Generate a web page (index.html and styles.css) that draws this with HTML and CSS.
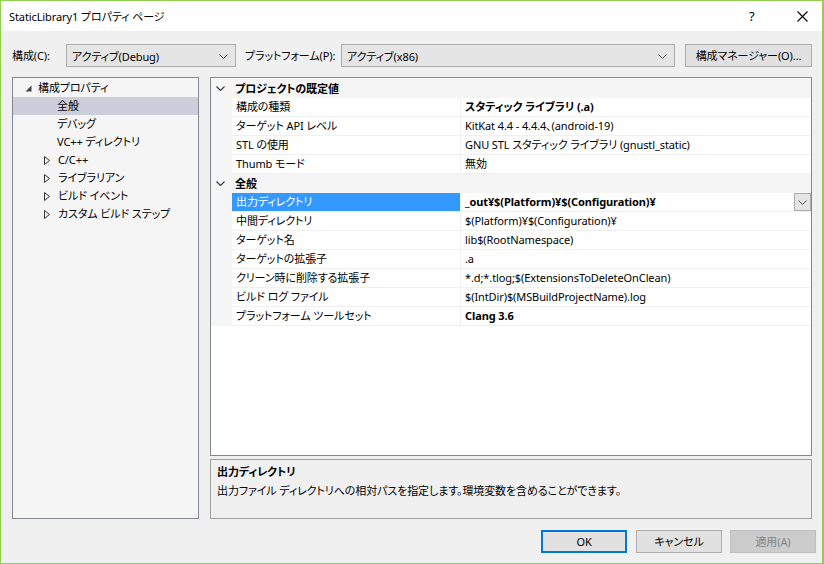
FILE: index.html
```html
<!DOCTYPE html>
<html lang="ja">
<head>
  <meta charset="UTF-8" />
  <title>StaticLibrary1 プロパティ ページ</title>
  <link rel="stylesheet" href="styles.css">
</head>
<body>
  <div class="window">
    <div class="titlebar">
      <span class="title">StaticLibrary1 プロパティ ページ</span>
      <span class="help">?</span>
      <span class="close">
        <svg width="11" height="11" viewBox="0 0 11 11"><path d="M0.5 0.5 L10.5 10.5 M10.5 0.5 L0.5 10.5" stroke="#000" stroke-width="1.1" fill="none"/></svg>
      </span>
    </div>

    <div class="content">
      <div class="toolbar">
        <span class="tb-label">構成(C):</span>
        <div class="combo combo-config">
          <span>アクティブ(Debug)</span>
          <svg class="chev" width="9" height="5" viewBox="0 0 9 5"><path d="M0.5 0.5 L4.5 4.5 L8.5 0.5" stroke="#555" fill="none"/></svg>
        </div>
        <span class="tb-label tb-platform">プラットフォーム(P):</span>
        <div class="combo combo-platform">
          <span>アクティブ(x86)</span>
          <svg class="chev" width="9" height="5" viewBox="0 0 9 5"><path d="M0.5 0.5 L4.5 4.5 L8.5 0.5" stroke="#555" fill="none"/></svg>
        </div>
        <button class="btn btn-manager">構成マネージャー(O)...</button>
      </div>

      <div class="main">
        <div class="tree">
          <div class="tree-row lvl0">
            <svg class="exp" width="7" height="7" viewBox="0 0 7 7"><path d="M6.5 0.5 L6.5 6.5 L0.5 6.5 Z" fill="#444"/></svg>
            <span>構成プロパティ</span>
          </div>
          <div class="tree-row lvl1 selected"><span>全般</span></div>
          <div class="tree-row lvl1"><span>デバッグ</span></div>
          <div class="tree-row lvl1"><span>VC++ ディレクトリ</span></div>
          <div class="tree-row lvl1 has-kids">
            <svg class="exp" width="6" height="9" viewBox="0 0 6 9"><path d="M0.5 0.5 L5.5 4.5 L0.5 8.5 Z" fill="none" stroke="#333"/></svg>
            <span>C/C++</span>
          </div>
          <div class="tree-row lvl1 has-kids">
            <svg class="exp" width="6" height="9" viewBox="0 0 6 9"><path d="M0.5 0.5 L5.5 4.5 L0.5 8.5 Z" fill="none" stroke="#333"/></svg>
            <span>ライブラリアン</span>
          </div>
          <div class="tree-row lvl1 has-kids">
            <svg class="exp" width="6" height="9" viewBox="0 0 6 9"><path d="M0.5 0.5 L5.5 4.5 L0.5 8.5 Z" fill="none" stroke="#333"/></svg>
            <span>ビルド イベント</span>
          </div>
          <div class="tree-row lvl1 has-kids">
            <svg class="exp" width="6" height="9" viewBox="0 0 6 9"><path d="M0.5 0.5 L5.5 4.5 L0.5 8.5 Z" fill="none" stroke="#333"/></svg>
            <span>カスタム ビルド ステップ</span>
          </div>
        </div>

        <div class="right">
          <div class="grid">
            <div class="cat-row">
              <svg class="cat-chev" width="9" height="5" viewBox="0 0 9 5"><path d="M0.5 0.5 L4.5 4.5 L8.5 0.5" stroke="#444" stroke-width="1.3" fill="none"/></svg>
              <span>プロジェクトの既定値</span>
            </div>
            <div class="prop-row"><div class="pname">構成の種類</div><div class="pval bold">スタティック ライブラリ (.a)</div></div>
            <div class="prop-row"><div class="pname">ターゲット API レベル</div><div class="pval">KitKat 4.4 - 4.4.4、(android-19)</div></div>
            <div class="prop-row"><div class="pname">STL の使用</div><div class="pval">GNU STL スタティック ライブラリ (gnustl_static)</div></div>
            <div class="prop-row"><div class="pname">Thumb モード</div><div class="pval">無効</div></div>
            <div class="cat-row">
              <svg class="cat-chev" width="9" height="5" viewBox="0 0 9 5"><path d="M0.5 0.5 L4.5 4.5 L8.5 0.5" stroke="#444" stroke-width="1.3" fill="none"/></svg>
              <span>全般</span>
            </div>
            <div class="prop-row active">
              <div class="pname">出力ディレクトリ</div>
              <div class="pval bold">
                <span>_out¥$(Platform)¥$(Configuration)¥</span>
                <span class="drop"><svg width="9" height="5" viewBox="0 0 9 5"><path d="M0.5 0.5 L4.5 4.5 L8.5 0.5" stroke="#555" fill="none"/></svg></span>
              </div>
            </div>
            <div class="prop-row"><div class="pname">中間ディレクトリ</div><div class="pval">$(Platform)¥$(Configuration)¥</div></div>
            <div class="prop-row"><div class="pname">ターゲット名</div><div class="pval">lib$(RootNamespace)</div></div>
            <div class="prop-row"><div class="pname">ターゲットの拡張子</div><div class="pval">.a</div></div>
            <div class="prop-row"><div class="pname">クリーン時に削除する拡張子</div><div class="pval">*.d;*.tlog;$(ExtensionsToDeleteOnClean)</div></div>
            <div class="prop-row"><div class="pname">ビルド ログ ファイル</div><div class="pval">$(IntDir)$(MSBuildProjectName).log</div></div>
            <div class="prop-row"><div class="pname">プラットフォーム ツールセット</div><div class="pval bold">Clang 3.6</div></div>
          </div>

          <div class="desc">
            <div class="desc-title">出力ディレクトリ</div>
            <div class="desc-text">出力ファイル ディレクトリへの相対パスを指定します。環境変数を含めることができます。</div>
          </div>
        </div>
      </div>

      <div class="footer">
        <button class="btn btn-ok">OK</button>
        <button class="btn">キャンセル</button>
        <button class="btn btn-disabled">適用(A)</button>
      </div>
    </div>
  </div>
</body>
</html>
```

FILE: styles.css
```css
* {
  box-sizing: border-box;
}

body {
  margin: 0;
  padding: 0;
  font-family: "Noto Sans", "Noto Sans CJK JP", sans-serif;
  font-feature-settings: "palt";
  font-size: 11px;
  letter-spacing: -0.1px;
  color: #000;
  background: #f0f0f0;
}

.window {
  width: 824px;
  height: 564px;
  border: 1px solid #8fd14f;
  border-right-width: 2px;
  display: flex;
  flex-direction: column;
  background: #f0f0f0;
}

.titlebar {
  height: 30px;
  background: #fff;
  display: flex;
  align-items: center;
  padding-left: 8px;
}

.title {
  flex: 1;
  line-height: 16px;
  margin-top: 1px;
}

.help {
  width: 14px;
  font-size: 13px;
  margin-right: 34px;
}

.close {
  display: flex;
  margin-right: 14px;
}

.content {
  flex: 1;
  display: flex;
  flex-direction: column;
  padding: 13px 10px 0 11px;
}

.toolbar {
  display: flex;
  align-items: center;
  height: 23px;
}

.tb-label {
  flex: none;
  white-space: nowrap;
  line-height: 16px;
  width: 54px;
}

.tb-platform {
  width: 96px;
  margin-left: 9px;
}

.combo {
  flex: none;
  height: 23px;
  background: #e5e5e5;
  border: 1px solid #acacac;
  display: flex;
  align-items: center;
  justify-content: space-between;
  padding: 0 7px 0 5px;
  white-space: nowrap;
}

.combo-config {
  width: 170px;
}

.combo-platform {
  width: 334px;
}

.chev {
  margin-top: 1px;
}

.btn {
  font-family: inherit;
  font-size: 11px;
  font-feature-settings: "palt";
  letter-spacing: -0.1px;
  height: 23px;
  width: 86px;
  background: #e1e1e1;
  border: 1px solid #adadad;
  color: #000;
  padding: 0;
  line-height: 16px;
  white-space: nowrap;
}

.btn-manager {
  flex: none;
  width: 127px;
  margin-left: 10px;
}

.main {
  display: flex;
  gap: 11px;
  margin-top: 10px;
  height: 442px;
}

.tree {
  width: 187px;
  background: #f5f5f5;
  border: 1px solid #828790;
  padding-top: 1px;
}

.tree-row {
  height: 18px;
  display: flex;
  align-items: center;
  line-height: 16px;
  white-space: nowrap;
}

.tree-row.lvl0 {
  padding-left: 12px;
}

.tree-row.lvl0 .exp {
  margin-right: 6px;
}

.tree-row.lvl1 {
  padding-left: 44px;
}

.tree-row.has-kids {
  padding-left: 31px;
}

.tree-row.has-kids .exp {
  margin-right: 8px;
}

.tree-row.selected {
  background: #cccedb;
}

.right {
  flex: 1;
  display: flex;
  flex-direction: column;
  gap: 3px;
}

.grid {
  height: 379px;
  background: #fff;
  border: 1px solid #828790;
  padding-top: 1px;
}

.cat-row {
  height: 19px;
  display: flex;
  align-items: center;
  background: #f5f5f5;
  font-weight: bold;
  line-height: 16px;
}

.cat-chev {
  margin: 0 10px 0 5px;
}

.prop-row {
  height: 19px;
  display: flex;
  padding-left: 21px;
  background: #f5f5f5;
}

.pname, .pval {
  height: 19px;
  display: flex;
  align-items: center;
  background: #fff;
  border-bottom: 1px solid #f0f0f0;
  line-height: 16px;
  padding-left: 4px;
  white-space: nowrap;
}

.pname {
  width: 229px;
  border-right: 1px solid #f0f0f0;
}

.pval {
  flex: 1;
  justify-content: space-between;
}

.bold {
  font-weight: bold;
}

.prop-row.active .pname {
  background: #3399ff;
  color: #fff;
}

.drop {
  width: 17px;
  height: 18px;
  background: #e5e5e5;
  border: 1px solid #acacac;
  display: flex;
  align-items: center;
  justify-content: center;
}

.desc {
  height: 60px;
  border: 1px solid #a0a0a0;
  background: #f0f0f0;
  padding: 3px 6px;
}

.desc-title {
  font-weight: bold;
  line-height: 18px;
}

.desc-text {
  line-height: 20px;
}

.footer {
  display: flex;
  justify-content: flex-end;
  gap: 8px;
  margin-top: 11px;
  margin-right: -4px;
}

.btn-ok {
  border: 2px solid #0078d7;
  margin-right: 1px;
}

.btn-disabled {
  background: #cccccc;
  border-color: #bfbfbf;
  color: #838383;
}
```
